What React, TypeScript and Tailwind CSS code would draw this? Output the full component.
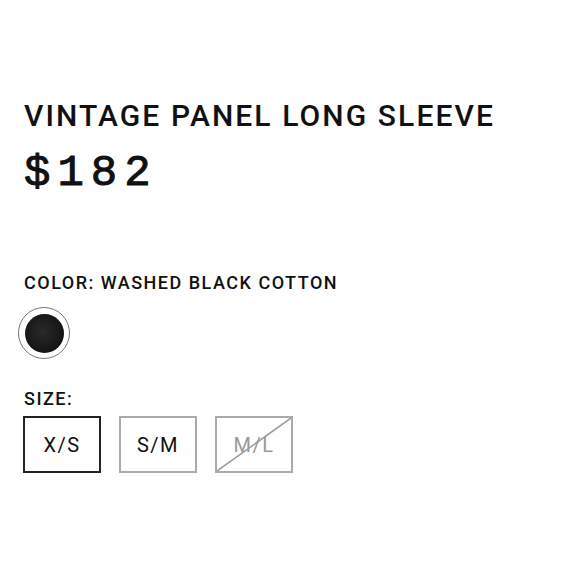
import React from "react";

export default function App() {
  return (
    <div className="w-[580px] h-[580px] bg-white text-[#111] pl-[24px] pt-[96px]" style={{ fontFamily: "Roboto, 'Liberation Sans', sans-serif" }}>
      <h1 className="text-[30px] leading-[40px] tracking-[2.1px] font-medium">VINTAGE PANEL LONG SLEEVE</h1>
      <div className="mt-[10px] text-[44px] leading-[54px] tracking-[7px] font-normal [-webkit-text-stroke:1px_#111]" style={{ fontFamily: "'Liberation Mono', 'Courier New', monospace" }}>$182</div>
      <div className="mt-[71px] text-[18px] leading-[24px] tracking-[1.5px] font-medium">COLOR: WASHED BLACK COTTON</div>
      <div className="mt-[12px] w-[52px] h-[52px] -ml-[6px] rounded-full border border-[#777] flex items-center justify-center">
        <div className="w-[39px] h-[39px] rounded-full bg-[radial-gradient(circle_at_45%_45%,#2a2a2a,#0a0a0a)]" />
      </div>
      <div className="mt-[28px] text-[18px] leading-[24px] tracking-[1.5px] font-medium">SIZE:</div>
      <div className="mt-[5px] flex gap-[18px] -ml-[1px]">
        <div className="w-[78px] h-[57px] border-2 border-[#222] flex items-center justify-center text-[20px] tracking-[1.5px]">X/S</div>
        <div className="w-[78px] h-[57px] border-2 border-[#aaa] flex items-center justify-center text-[20px] tracking-[1.5px]">S/M</div>
        <div className="relative w-[78px] h-[57px] border-2 border-[#aaa] flex items-center justify-center text-[20px] tracking-[1.5px] text-[#999]">
          M/L
          <svg className="absolute inset-0 w-full h-full" viewBox="0 0 74 53" preserveAspectRatio="none">
            <line x1="0" y1="53" x2="74" y2="0" stroke="#999" strokeWidth="1.5" />
          </svg>
        </div>
      </div>
    </div>
  );
}
